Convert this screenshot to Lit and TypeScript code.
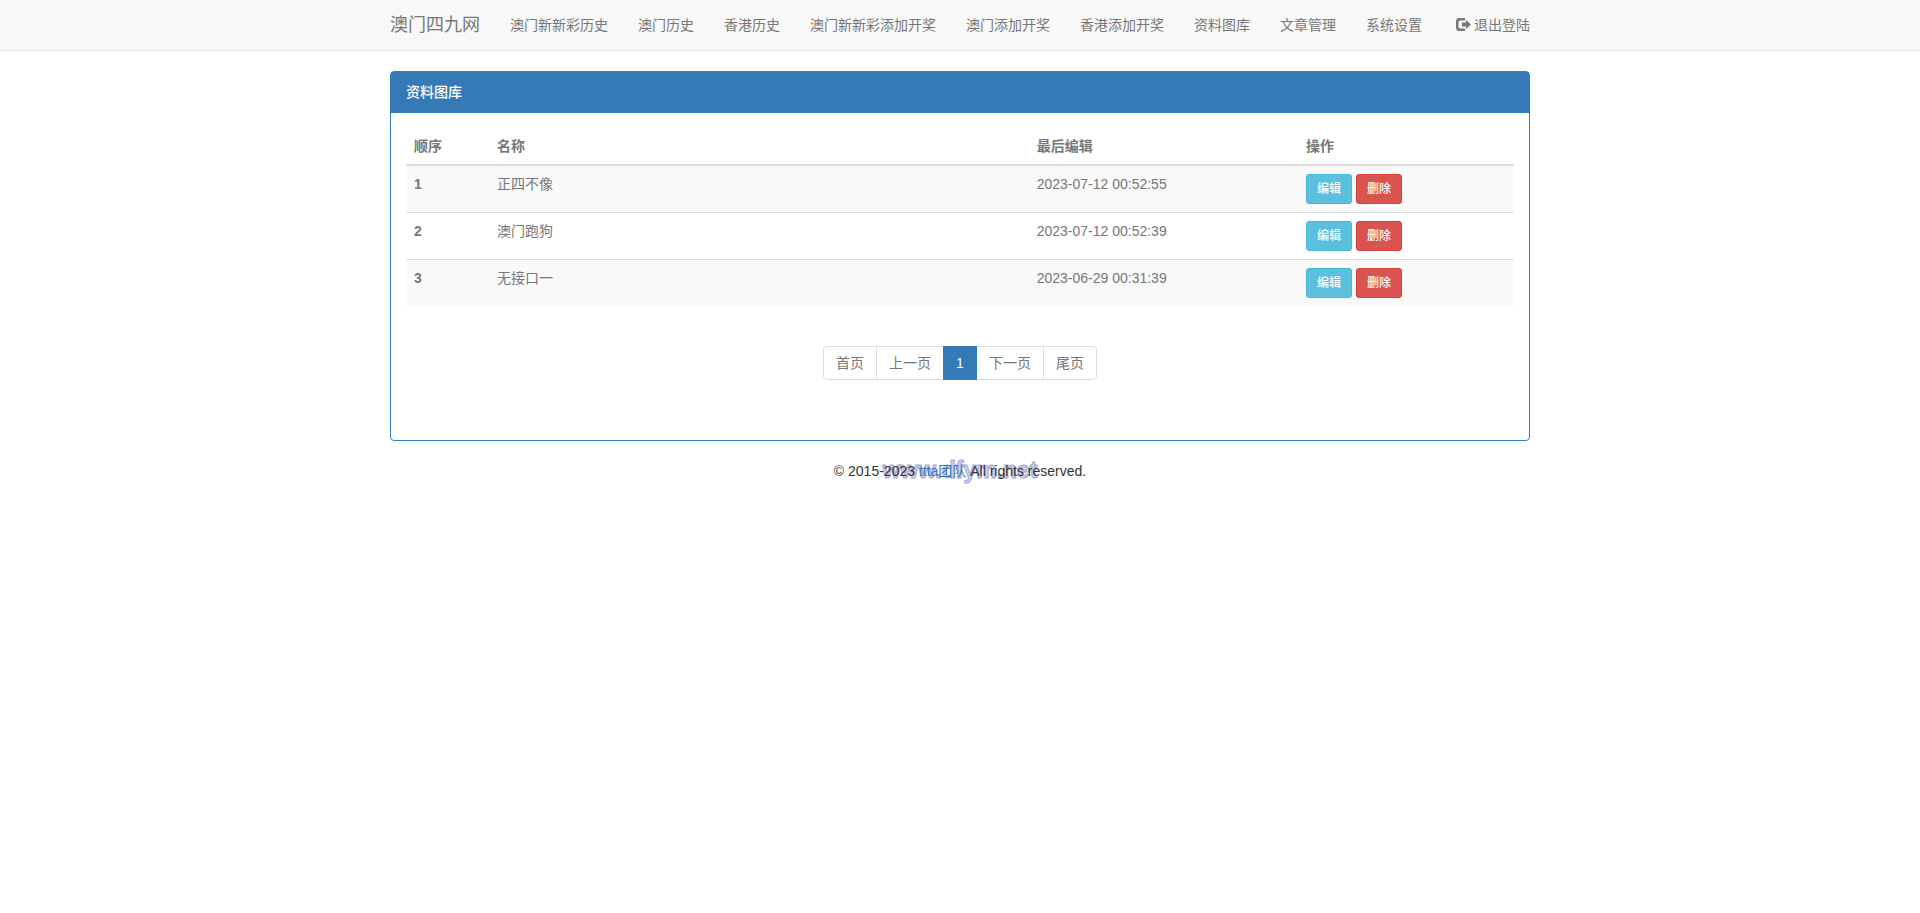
import { LitElement, html, css } from "lit";
import { customElement, state } from "lit/decorators.js";

interface Entry {
  id: number;
  name: string;
  edited: string;
}

@customElement("app-root")
export class AppRoot extends LitElement {
  static styles = css`
    :host {
      display: block;
      min-height: 100vh;
      background: #fff;
      color: #333;
      font: 14px/20px "Liberation Sans", "Noto Sans CJK SC", sans-serif;
    }
    * { box-sizing: border-box; }
    a { color: #337ab7; text-decoration: none; }
    .container {
      max-width: 1170px;
      margin: 0 auto;
      padding: 0 15px;
    }
    .navbar {
      background: #f8f8f8;
      border-bottom: 1px solid #e7e7e7;
      margin-bottom: 20px;
    }
    .bar { display: flex; flex-wrap: wrap; }
    .bar a { display: block; padding: 15px; color: #777; }
    .bar a:hover { color: #333; }
    .bar .brand { padding-left: 0; font-size: 18px; }
    .menu { display: flex; flex-wrap: wrap; list-style: none; margin: 0; padding: 0; }
    .bar .logout {
      display: flex;
      gap: 3px;
      margin-left: auto;
      padding-right: 0;
    }
    .icon { width: 15px; height: 13px; margin-top: 3px; fill: currentColor; }
    .panel { border: 1px solid #337ab7; border-radius: 4px; margin-bottom: 20px; }
    .heading {
      margin: 0;
      padding: 10px 15px 11px;
      background: #337ab7;
      color: #fff;
      font-size: 14px;
      font-weight: 500;
    }
    .body { padding: 15px 15px 60px; color: #777; }
    .table {
      width: 100%;
      table-layout: fixed;
      border-collapse: separate;
      border-spacing: 0;
    }
    .table th, .table td { padding: 8px; text-align: left; vertical-align: top; }
    .table thead th { border-bottom: 2px solid #ddd; }
    .table tbody tr:nth-child(odd) { background: #f9f9f9; }
    .table tbody tr + tr > * { border-top: 1px solid #ddd; }
    .col-order { width: 7.5%; }
    .col-name { width: 48.7%; }
    .col-time { width: 24.3%; }
    .actions { display: flex; gap: 4px; }
    .btn {
      padding: 5px 10px;
      border: 1px solid;
      border-radius: 3px;
      color: #fff;
      font: inherit;
      font-size: 12px;
      font-weight: 500;
      line-height: 18px;
      cursor: pointer;
    }
    .edit { background: #5bc0de; border-color: #46b8da; }
    .delete { background: #d9534f; border-color: #d43f3a; }
    .pages {
      display: flex;
      justify-content: center;
      list-style: none;
      margin: 40px 0 0;
      padding: 0;
    }
    .pages a {
      display: block;
      margin-left: -1px;
      padding: 6px 12px;
      border: 1px solid #ddd;
      color: #777;
    }
    .pages li:first-child a { margin-left: 0; border-radius: 4px 0 0 4px; }
    .pages li:last-child a { border-radius: 0 4px 4px 0; }
    .pages .current {
      position: relative;
      background: #337ab7;
      border-color: #337ab7;
      color: #fff;
    }
    .footer { position: relative; text-align: center; }
    .footer p { position: relative; z-index: 1; margin: 0; }
    .watermark {
      position: absolute;
      inset: 0;
      font-size: 23px;
      font-weight: 700;
      line-height: 18px;
      color: #ccccf2;
      -webkit-text-stroke: 1px #a9a9d0;
      pointer-events: none;
    }
  `;

  private links = [
    "澳门新新彩历史", "澳门历史", "香港历史", "澳门新新彩添加开奖", "澳门添加开奖",
    "香港添加开奖", "资料图库", "文章管理", "系统设置",
  ];

  @state() private entries: Entry[] = [
    { id: 1, name: "正四不像", edited: "2023-07-12 00:52:55" },
    { id: 2, name: "澳门跑狗", edited: "2023-07-12 00:52:39" },
    { id: 3, name: "无接口一", edited: "2023-06-29 00:31:39" },
  ];

  private pages = ["首页", "上一页", "1", "下一页", "尾页"];

  render() {
    return html`
      <nav class="navbar">
        <div class="container bar">
          <a class="brand" href="#">澳门四九网</a>
          <ul class="menu">
            ${this.links.map((l) => html`<li><a href="#">${l}</a></li>`)}
          </ul>
          <a class="logout" href="#">
            <svg class="icon" viewBox="0 0 15 13" aria-hidden="true">
              <path d="M9 0H3.5Q0 0 0 3.5V9.500Q0 13 3.500 13H9V10.500H4Q2.500 10.500 2.500 9V4Q2.500 2.500 4 2.500H9Z" />
              <path d="M10 2L15 6.500L10 11V8.500H6V4.500H10Z" />
            </svg>退出登陆</a>
        </div>
      </nav>
      <main class="container">
        <section class="panel">
          <h3 class="heading">资料图库</h3>
          <div class="body">
            <table class="table">
              <thead>
                <tr>
                  <th class="col-order" scope="col">顺序</th>
                  <th class="col-name" scope="col">名称</th>
                  <th class="col-time" scope="col">最后编辑</th>
                  <th scope="col">操作</th>
                </tr>
              </thead>
              <tbody>
                ${this.entries.map((e) => html`
                  <tr>
                    <th scope="row">${e.id}</th>
                    <td>${e.name}</td>
                    <td>${e.edited}</td>
                    <td>
                      <div class="actions">
                        <button class="btn edit" type="button">编辑</button>
                        <button class="btn delete" type="button">删除</button>
                      </div>
                    </td>
                  </tr>`)}
              </tbody>
            </table>
            <ul class="pages">
              ${this.pages.map((p) => html`<li><a class=${p === "1" ? "current" : ""} href="#">${p}</a></li>`)}
            </ul>
          </div>
        </section>
      </main>
      <footer class="container footer">
        <p>© 2015-2023 <a href="#">ttta团队</a> All rights reserved.</p>
        <div class="watermark">www.dfym.net</div>
      </footer>
    `;
  }
}
